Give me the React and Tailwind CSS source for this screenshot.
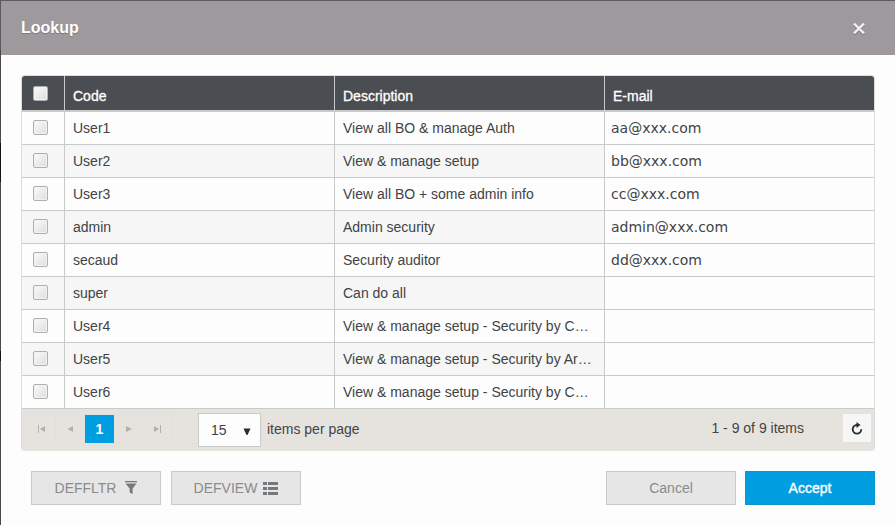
import React from "react";

const rows = [
  ["User1", "View all BO & manage Auth", "aa@xxx.com"],
  ["User2", "View & manage setup", "bb@xxx.com"],
  ["User3", "View all BO + some admin info", "cc@xxx.com"],
  ["admin", "Admin security", "admin@xxx.com"],
  ["secaud", "Security auditor", "dd@xxx.com"],
  ["super", "Can do all", ""],
  ["User4", "View & manage setup - Security by Company", ""],
  ["User5", "View & manage setup - Security by Area", ""],
  ["User6", "View & manage setup - Security by Country", ""],
];

const grid = "grid grid-cols-[42px_270px_270px_270px]";

function Checkbox() {
  return (
    <span
      role="checkbox"
      aria-checked="false"
      className="block size-[15px] rounded-[2px] border border-[#adb0b2] bg-linear-to-br from-[#fbfbfb] to-[#dedddb] shadow-[inset_0_0_0_1px_#f2f2f2]"
    />
  );
}

function PageCell({ children, last }) {
  return (
    <button className={"flex h-full w-[29px] items-center justify-center " + (last ? "" : "border-r border-[#dfe0df]")}>
      <svg width="9" height="8" viewBox="0 0 9 8" fill="#afb2b3">{children}</svg>
    </button>
  );
}

function Button({ children, primary }) {
  return (
    <button
      className={
        "flex h-[34px] w-[130px] items-center justify-center border text-[14px] " +
        (primary
          ? "border-[#0b94ce] bg-[#019ee1] text-white [-webkit-text-stroke:0.35px_white]"
          : "border-[#c9cacb] bg-[#e6e6e6] text-[#8a8b8c]")
      }
    >
      {children}
    </button>
  );
}

export default function App() {
  return (
    <div className="flex h-[525px] w-[895px] overflow-hidden bg-[#fdfdfd] font-['Liberation_Sans',Arial,sans-serif] text-[14px] text-[#414345]">
      <div className="flex w-px shrink-0 flex-col bg-[#49494b]">
        <div className="h-[50px] bg-[#59595b]" />
        <div className="h-[93px]" />
        <div className="h-[39px] bg-[#101517]" />
        <div className="h-[169px]" />
        <div className="h-[10px] bg-[#101517]" />
      </div>
      <div className="flex w-[894px] flex-col">
        <header className="flex h-[55px] items-center justify-between border-t border-[#5b5c5b] bg-[#9d999c] pr-[29px] pl-[20px]">
          <h1 className="text-[16px] leading-[18px] font-bold text-white [text-shadow:0_1px_1px_#777]">Lookup</h1>
          <svg width="14" height="14" viewBox="0 0 14 14" fill="none" strokeWidth="2.4" className="mt-[2px]">
            <path d="M2 2.7 12 12.3M12 2.7 2 12.3" stroke="#77757a" />
            <path d="M2 1.7 12 11.3M12 1.7 2 11.3" stroke="#efefef" />
          </svg>
        </header>

        <section className="mt-[20px] ml-[20px] w-[854px] overflow-hidden rounded-[4px] border-x border-t border-[#dcdcd8]">
          <div className={grid + " h-[36px] border-b-2 border-[#c9cbca] bg-[#4a4d51] text-white"}>
            <div className="pt-[10px] pl-[11px]"><Checkbox /></div>
            {["Code", "Description", "E-mail"].map((t) => (
              <div key={t} className="border-l border-[#c9cbca] pt-[12px] pl-[8px] leading-[16px] [-webkit-text-stroke:0.3px_white]">{t}</div>
            ))}
          </div>
          {rows.map(([code, desc, mail], i) => (
            <div key={code} className={grid + " h-[33px] border-b border-[#c9caca] leading-[32px] " + (i % 2 ? "bg-[#f6f6f6]" : "bg-[#fdfdfd]")}>
              <div className="pt-[8px] pl-[11px]"><Checkbox /></div>
              <div className="border-l border-[#c9caca] pl-[8px]">{code}</div>
              <div className="truncate border-l border-[#c9caca] pr-[12px] pl-[8px]">{desc}</div>
              <div className="border-l border-[#c9caca] bg-[#fdfdfd] pl-[6px] font-['DejaVu_Sans',Verdana,sans-serif] text-[14px]">{mail}</div>
            </div>
          ))}
          <footer className="flex h-[42px] bg-[#e6e3df] pt-[4px] pr-[3px] pl-[4px]">
            <nav className="mt-[1px] flex h-[30px] w-[147px] rounded-[3px] border border-[#dfe0df]">
              <PageCell><path d="M1 0h1v8H1zM8 1v6L3 4z" /></PageCell>
              <PageCell><path d="M7 1v6L1.500 4z" /></PageCell>
              <button className="h-[28px] w-[29px] bg-[#019ee1] text-[14px] font-bold text-white">1</button>
              <PageCell><path d="M2 1v6l6-3z" /></PageCell>
              <PageCell last><path d="M7 0h1v8H7zM1 1v6l5-3z" /></PageCell>
            </nav>
            <div className="ml-[25px] flex h-[34px] w-[63px] items-center justify-between border border-[#c9cacb] bg-[#fdfdfd] pr-[9px] pl-[12px]">
              <span>15</span>
              <svg width="8" height="7" viewBox="0 0 8 7" className="mt-[2px]"><path d="M0.500 0.500h7L4.500 7h-1z" fill="#292b2d" /></svg>
            </div>
            <span className="ml-[6px] leading-[33px]">items per page</span>
            <span className="mr-[39px] ml-auto leading-[31px]">1 - 9 of 9 items</span>
            <button className="mt-[1px] flex size-[28px] items-center justify-center bg-[#f6f6f6]">
              <svg width="12" height="13" viewBox="0 0 12 13">
                <path d="M6 3A4.300 4.300 0 1 0 10.300 7.300" fill="none" stroke="#2b2d2f" strokeWidth="1.900" />
                <path d="M5.500 0 9.500 3 5.500 6z" fill="#2b2d2f" />
              </svg>
            </button>
          </footer>
        </section>

        <div className="mt-[20px] flex pl-[30px]">
          <Button>
            <span>DEFFLTR</span>
            <svg width="12" height="14" viewBox="0 0 12 14" fill="#777879" className="ml-[9px]">
              <path d="M0 0h12v1.300H0zM0.500 2.500h11L7.600 7.500V13L4.700 11.500v-4z" />
            </svg>
          </Button>
          <div className="ml-[10px]">
            <Button>
              <span>DEFVIEW</span>
              <svg width="15" height="13" viewBox="0 0 15 13" fill="#777879" className="ml-[6px]">
                <path d="M0 0h4v3H0zM5 0h10v3H5zM0 5h4v3H0zM5 5h10v3H5zM0 10h4v3H0zM5 10h10v3H5z" />
              </svg>
            </Button>
          </div>
          <div className="ml-[305px]"><Button>Cancel</Button></div>
          <div className="ml-[9px]"><Button primary>Accept</Button></div>
        </div>
      </div>
    </div>
  );
}
